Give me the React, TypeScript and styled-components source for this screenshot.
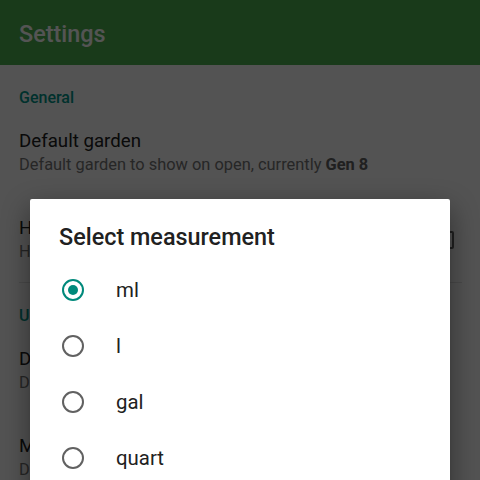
import styled, { createGlobalStyle } from "styled-components";

const GlobalStyle = createGlobalStyle`
  html, body {
    margin: 0;
    padding: 0;
  }

  body {
    font-family: Roboto, "Noto Sans", "Liberation Sans", sans-serif;
  }
`;

const Screen = styled.div`
  position: relative;
  width: 480px;
  height: 480px;
  overflow: hidden;
  background: #fafafa;
`;

const AppBar = styled.header`
  height: 65px;
  display: flex;
  align-items: center;
  padding: 2px 0 0 19px;
  box-sizing: border-box;
  background: #4caf50;
  color: #ffffff;
  font-size: 23.4px;
  font-weight: 500;
`;

const SectionHeader = styled.div`
  padding: 21px 19px 0;
  line-height: 24px;
  font-size: 16px;
  font-weight: 500;
  color: #009688;
`;

const PrefRow = styled.div`
  display: flex;
  align-items: center;
  justify-content: space-between;
  padding: 19px 26px 20px 19px;
`;

const PrefText = styled.div`
  display: flex;
  flex-direction: column;
`;

const PrefTitle = styled.div`
  line-height: 24px;
  font-size: 18.7px;
  color: #212121;
`;

const PrefSummary = styled.div`
  line-height: 24px;
  font-size: 16.4px;
  color: #757575;
  white-space: nowrap;

  b {
    font-weight: 700;
    color: #616161;
  }
`;

const CheckBox = styled.span`
  width: 14px;
  height: 14px;
  border: 2px solid #616161;
  border-radius: 2px;
`;

const Divider = styled.hr`
  margin: -2px 18px 0 19px;
  border: none;
  border-top: 1px solid #e0e0e0;
`;

const Scrim = styled.div`
  position: absolute;
  inset: 0;
  background: rgba(0, 0, 0, 0.67);
`;

const Dialog = styled.div`
  position: absolute;
  left: 30px;
  top: 199px;
  width: 420px;
  height: 320px;
  background: #ffffff;
  border-radius: 2px;
  box-shadow: 0 10px 28px rgba(0, 0, 0, 0.45);
`;

const DialogTitle = styled.h2`
  margin: 0;
  padding: 24px 29px 11px;
  line-height: 28px;
  font-size: 23.4px;
  font-weight: 500;
  color: #212121;
`;

const Option = styled.label`
  display: flex;
  align-items: center;
  height: 56px;
  padding-left: 32px;
  gap: 32px;
  font-size: 20.4px;
  color: #212121;
`;

const Radio = styled.span<{ $checked: boolean }>`
  box-sizing: border-box;
  display: flex;
  align-items: center;
  justify-content: center;
  width: 22px;
  height: 22px;
  border-radius: 50%;
  border: 2px solid ${(p) => (p.$checked ? "#00897b" : "#616161")};

  &::after {
    content: "";
    width: 10px;
    height: 10px;
    border-radius: 50%;
    background: ${(p) => (p.$checked ? "#00897b" : "transparent")};
  }
`;

const units = ["ml", "l", "gal", "quart"];

export default function App() {
  const selected = "ml";

  return (
    <>
      <GlobalStyle />
      <Screen>
        <AppBar>Settings</AppBar>

        <SectionHeader>General</SectionHeader>
        <PrefRow>
          <PrefText>
            <PrefTitle>Default garden</PrefTitle>
            <PrefSummary>
              Default garden to show on open, currently <b>Gen 8</b>
            </PrefSummary>
          </PrefText>
        </PrefRow>
        <PrefRow>
          <PrefText>
            <PrefTitle>Hide</PrefTitle>
            <PrefSummary>Hide</PrefSummary>
          </PrefText>
          <CheckBox />
        </PrefRow>
        <Divider />

        <SectionHeader>Units</SectionHeader>
        <PrefRow>
          <PrefText>
            <PrefTitle>Default</PrefTitle>
            <PrefSummary>Default</PrefSummary>
          </PrefText>
        </PrefRow>
        <PrefRow>
          <PrefText>
            <PrefTitle>Metric</PrefTitle>
            <PrefSummary>Default</PrefSummary>
          </PrefText>
        </PrefRow>

        <Scrim />
        <Dialog>
          <DialogTitle>Select measurement</DialogTitle>
          {units.map((u) => (
            <Option key={u}>
              <Radio $checked={u === selected} />
              {u}
            </Option>
          ))}
        </Dialog>
      </Screen>
    </>
  );
}
